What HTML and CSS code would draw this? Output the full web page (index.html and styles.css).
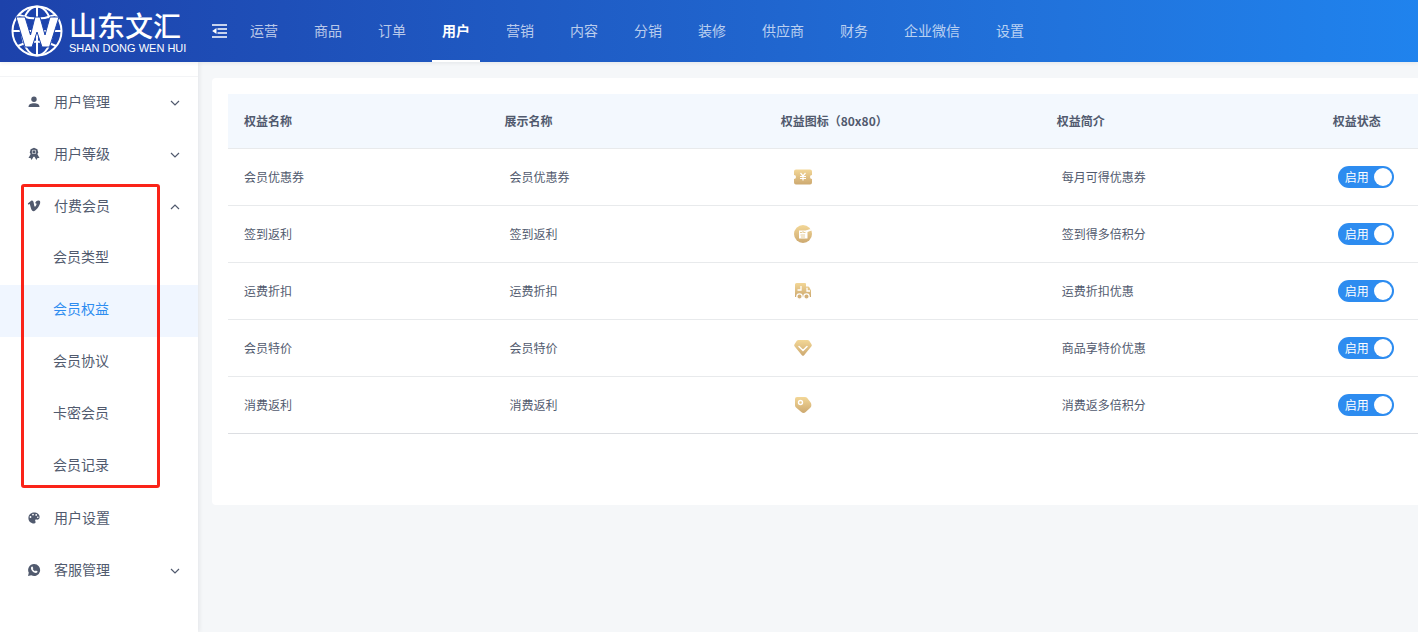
FILE: index.html
```html
<!DOCTYPE html>
<html lang="zh-CN">
<head>
<meta charset="utf-8">
<meta name="viewport" content="width=device-width, initial-scale=1">
<title>会员权益</title>
<link rel="stylesheet" href="styles.css">
</head>
<body>
<svg class="defs" width="0" height="0" aria-hidden="true">
  <defs>
    <linearGradient id="gold" x1="0" y1="0" x2="0" y2="1">
      <stop offset="0" stop-color="#f3d797"/>
      <stop offset="1" stop-color="#cda970"/>
    </linearGradient>
    <symbol id="chevron" viewBox="0 0 10 10"><path d="M1 3l4 4 4-4" fill="none" stroke="currentColor" stroke-width="1.2"/></symbol>
  </defs>
</svg>
<header class="topbar">
  <a class="logo" href="#">
    <svg class="logo-mark" viewBox="0 0 52 52" aria-hidden="true">
      <g fill="none" stroke="#fff" stroke-width="2">
        <circle cx="26" cy="26" r="24.5"/>
        <ellipse cx="26" cy="26" rx="15" ry="24.5"/>
        <path d="M26 2v48M1 26h50M8 10q18 7 36 0M7 41q19-9 38 0"/>
      </g>
      <path d="M5 12h9l5.500 18L24 12h5l5 18 5-18h9L38.500 42H31l-5-15-5 15h-7z" fill="#fff" stroke="#1e46ae" stroke-width="1"/>
    </svg>
    <span class="logo-text">
      <span class="logo-cn">山东文汇</span>
      <span class="logo-en">SHAN DONG WEN HUI</span>
    </span>
  </a>
  <button class="collapse" type="button" aria-label="收起菜单">
    <svg width="16" height="14" viewBox="0 0 16 14" aria-hidden="true"><path d="M0 1h15M5.500 5h9.500M5.500 9h9.500M0 13h15" stroke="#fff" stroke-width="1.700"/><path d="M4.500 4v6L.2 7z" fill="#fff"/></svg>
  </button>
  <nav class="topnav">
    <a href="#">运营</a><a href="#">商品</a><a href="#">订单</a><a class="current" href="#">用户</a><a href="#">营销</a><a href="#">内容</a><a href="#">分销</a><a href="#">装修</a><a href="#">供应商</a><a href="#">财务</a><a href="#">企业微信</a><a href="#">设置</a>
  </nav>
</header>
<div class="layout">
  <aside class="sidebar">
    <nav class="menu">
      <button class="menu-item" type="button">
        <svg class="menu-icon" viewBox="0 0 14 14" aria-hidden="true"><circle cx="7" cy="4.200" r="2.700"/><path d="M1.500 12c0-2.800 2.500-3.800 5.500-3.800s5.500 1 5.500 3.800z"/></svg>
        <span>用户管理</span><svg class="arrow" aria-hidden="true"><use href="#chevron"/></svg>
      </button>
      <button class="menu-item" type="button">
        <svg class="menu-icon" viewBox="0 0 14 14" aria-hidden="true"><path fill-rule="evenodd" d="M7 .8l1.700.6 1.700.8.400 1.800.5 1.500-1 1.500L12.500 11l-2 .1L9.400 13 7.500 9.800h-1L4.600 13l-1.100-1.900-2-.1L3.700 7l-1-1.500.5-1.500.4-1.800 1.700-.8zM7 2.700a2.200 2.200 0 1 0 0 4.400 2.200 2.200 0 0 0 0-4.400z"/><circle cx="7" cy="4.900" r="1.600"/></svg>
        <span>用户等级</span><svg class="arrow" aria-hidden="true"><use href="#chevron"/></svg>
      </button>
      <div class="menu-group">
        <button class="menu-item" type="button" aria-expanded="true">
          <svg class="menu-icon" viewBox="0 0 14 14" aria-hidden="true"><path d="M.8 4.500L4.200 1.800c1.500-.7 2.200.4 2.500 2 .3 1.800.6 3.900 1.200 3.900.5 0 1.700-1.900 1.600-2.700-.1-.9-.9-.8-1.500-.5.6-2.100 1.900-3.100 3.600-3 1.500.1 1.800 1.200 1.500 2.800-.5 2.700-4.200 7.800-6.500 7.900-2 .1-2.400-2-3-4.100-.4-1.500-.6-3-1.100-3-.3 0-.7.300-1.100.6z"/></svg>
          <span>付费会员</span><svg class="arrow up" aria-hidden="true"><use href="#chevron"/></svg>
        </button>
        <div class="submenu">
          <a href="#">会员类型</a>
          <a class="current" href="#">会员权益</a>
          <a href="#">会员协议</a>
          <a href="#">卡密会员</a>
          <a href="#">会员记录</a>
        </div>
        <div class="highlight"></div>
      </div>
      <button class="menu-item" type="button">
        <svg class="menu-icon" viewBox="0 0 14 14" aria-hidden="true"><path fill-rule="evenodd" d="M7 1.500c3.300 0 5.600 2 5.600 4.500 0 2-1.400 2.800-3 2.600-1.200-.2-1.800.5-1.300 1.500.6 1.200.3 2.500-1.300 2.500-3.100 0-5.600-2.300-5.600-5.500S3.900 1.500 7 1.500zM6 2.700a.9.900 0 1 0 0 1.800.9.900 0 0 0 0-1.800zm3.200.3a.9.900 0 1 0 0 1.800.9.900 0 0 0 0-1.800zM3.500 5.100a.9.900 0 1 0 0 1.800.9.900 0 0 0 0-1.800zm7.300.3a.8.800 0 1 0 0 1.600.8.800 0 0 0 0-1.600z"/></svg>
        <span>用户设置</span>
      </button>
      <button class="menu-item" type="button">
        <svg class="menu-icon" viewBox="0 0 14 14" aria-hidden="true"><path d="M7 1a6 6 0 1 1-2.700 11.300L1 13l.8-3.200A6 6 0 0 1 7 1z"/><path d="M4.500 3.700l1-.2.8 1.700-.6.900c.5 1 1.200 1.700 2.300 2.200l.8-.8 1.700.8c.1 1-.7 1.700-1.600 1.700C6.400 9.900 4 7.500 4 5.100c0-.6.200-1.100.5-1.400z" fill="#fff"/></svg>
        <span>客服管理</span><svg class="arrow" aria-hidden="true"><use href="#chevron"/></svg>
      </button>
    </nav>
  </aside>
  <main class="content">
    <section class="card">
      <table class="benefits">
        <thead>
          <tr><th class="col-name" scope="col">权益名称</th><th class="col-wide" scope="col">展示名称</th><th class="col-wide" scope="col">权益图标（80x80）</th><th class="col-wide" scope="col">权益简介</th><th scope="col">权益状态</th></tr>
        </thead>
        <tbody>
          <tr>
            <td>会员优惠券</td><td>会员优惠券</td>
            <td><svg class="badge" viewBox="0 0 20 20" role="img" aria-label="优惠券"><path d="M3 2.500h14q2 0 2 2v3.500a2 2 0 0 0 0 4v3.500q0 2-2 2H3q-2 0-2-2V12a2 2 0 0 0 0-4V4.500q0-2 2-2z" fill="url(#gold)"/><path d="M7.500 6l2.500 3 2.500-3M7 9.500h6M7 11.500h6M10 9v4.500" fill="none" stroke="#fff" stroke-width="1.200"/></svg></td>
            <td>每月可得优惠券</td>
            <td><label class="switch"><input type="checkbox" role="switch" checked><span class="track">启用</span></label></td>
          </tr>
          <tr>
            <td>签到返利</td><td>签到返利</td>
            <td><svg class="badge" viewBox="0 0 20 20" role="img" aria-label="签到"><circle cx="10" cy="10" r="9" fill="url(#gold)"/><path d="M6 6.500h6.500l5-1.500 1 1.500-4 1.500v6.500H6z" fill="#fff"/><path d="M7 8.500h2m1.500 0h2M7.500 11h4.500M8 13h4M10 7v2" stroke="#dfc080" stroke-width=".8"/></svg></td>
            <td>签到得多倍积分</td>
            <td><label class="switch"><input type="checkbox" role="switch" checked><span class="track">启用</span></label></td>
          </tr>
          <tr>
            <td>运费折扣</td><td>运费折扣</td>
            <td><svg class="badge" viewBox="0 0 20 20" role="img" aria-label="运费"><path d="M3.500 2H12q1 0 1 1v2.500h2q1 0 1.500 1L18 9.500V16H2V3.500Q2 2 3.500 2z" fill="url(#gold)"/><path d="M14 6.700V10h3M8 5v4H4.500" fill="none" stroke="#fff" stroke-width="1.300"/><g fill="#d3b078" stroke="#fff" stroke-width="1.300"><circle cx="6.500" cy="15.500" r="2.700"/><circle cx="13.500" cy="15.500" r="2.700"/></g></svg></td>
            <td>运费折扣优惠</td>
            <td><label class="switch"><input type="checkbox" role="switch" checked><span class="track">启用</span></label></td>
          </tr>
          <tr>
            <td>会员特价</td><td>会员特价</td>
            <td><svg class="badge" viewBox="0 0 20 20" role="img" aria-label="特价"><path d="M5.500 2h9q1 0 1.700.8l2.300 3.500q.8 1.200-.2 2.200l-7.200 8.700q-1.100 1.200-2.200 0L1.700 8.500q-1-1-.2-2.200l2.300-3.500Q4.500 2 5.500 2z" fill="url(#gold)"/><path d="M6 8.500l4 4 4-4" fill="none" stroke="#fff" stroke-width="1.500" stroke-linecap="round"/></svg></td>
            <td>商品享特价优惠</td>
            <td><label class="switch"><input type="checkbox" role="switch" checked><span class="track">启用</span></label></td>
          </tr>
          <tr>
            <td>消费返利</td><td>消费返利</td>
            <td><svg class="badge" viewBox="0 0 20 20" role="img" aria-label="返利"><path d="M4 2h8q1.200 0 2 .8l3.300 4.300q1 1.200 1 2.500v1.200q0 1-1 2l-4.600 4.100q-2.200 2-4.400 0L3 12.500q-1-1-1-2.200V4Q2 2 4 2z" fill="url(#gold)"/><circle cx="7.500" cy="7.500" r="2" fill="none" stroke="#fff" stroke-width="1.400"/></svg></td>
            <td>消费返多倍积分</td>
            <td><label class="switch"><input type="checkbox" role="switch" checked><span class="track">启用</span></label></td>
          </tr>
        </tbody>
      </table>
    </section>
  </main>
</div>
</body>
</html>
```
FILE: styles.css
```css
* { box-sizing: border-box; }
body {
  margin: 0;
  min-height: 100vh;
  display: flex;
  flex-direction: column;
  background: #f5f7f9;
  color: #515a6e;
  font: 14px/20px "Noto Sans CJK SC", sans-serif;
}
a { color: inherit; text-decoration: none; }
button { border: 0; padding: 0; background: none; color: inherit; font: inherit; cursor: pointer; }
.defs { position: absolute; }

.topbar {
  position: relative;
  z-index: 1;
  display: flex;
  height: 62px;
  color: #fff;
  background: linear-gradient(90deg, #1d42ab, #2173dc 75%, #1e93ff 125%);
  box-shadow: 0 1px 4px rgba(0, 21, 41, 0.08);
}
.logo {
  display: flex;
  align-items: center;
  gap: 6px;
  width: 212px;
  padding-left: 11px;
}
.logo-mark { width: 52px; height: 52px; }
.logo-text { display: flex; flex-direction: column; white-space: nowrap; }
.logo-cn { font-size: 28px; font-weight: 500; line-height: 33px; }
.logo-en { font: 11px/12px "Liberation Sans", Arial, sans-serif; }
.collapse { display: flex; align-items: center; width: 28px; }
.topnav { display: flex; gap: 16px; }
.topnav a {
  padding: 20px 10px;
  border-bottom: 2px solid transparent;
  color: rgba(255, 255, 255, 0.7);
  white-space: nowrap;
}
.topnav .current { color: #fff; font-weight: 700; border-color: #fff; }

.layout { flex: 1; display: flex; }
.sidebar {
  flex: none;
  width: 198px;
  padding-top: 14px;
  background: #fff;
  box-shadow: 2px 0 4px rgba(0, 21, 41, 0.06);
}
.menu { border-top: 1px solid #f3f4f6; }
.menu-item {
  display: flex;
  align-items: center;
  width: 100%;
  height: 52px;
  padding: 0 18px 2px 27px;
  text-align: left;
}
.menu-item span { flex: 1; padding-bottom: 2px; }
.menu-icon { width: 14px; height: 14px; margin-right: 13px; fill: currentColor; }
.arrow { width: 10px; height: 10px; margin-top: 2px; }
.arrow.up { transform: rotate(180deg); }
.menu-group { position: relative; }
.submenu a { display: block; padding: 13px 0 19px 53px; }
.submenu .current { background: #f0f6ff; color: #2d8cf0; }
.highlight {
  position: absolute;
  inset: 3px 38px 5px 21px;
  border: 3px solid #fa2318;
  border-radius: 3px;
  pointer-events: none;
}

.content { flex: 1; min-width: 0; padding: 16px 0 0 14px; }
.card {
  padding: 16px 0 71px 16px;
  background: #fff;
  border-radius: 4px 0 0 4px;
}
.benefits {
  width: 100%;
  table-layout: fixed;
  border-collapse: separate;
  border-spacing: 0;
  font-size: 12px;
}
.benefits th, .benefits td {
  border-bottom: 1px solid #e8eaec;
  text-align: left;
  white-space: nowrap;
}
.benefits th {
  height: 55px;
  padding: 0 0 0 16px;
  background: #f3f8fe;
  font-weight: 700;
}
.benefits td { height: 57px; padding: 0 0 0 21px; }
.benefits td:first-child { padding-left: 16px; }
.benefits tr:last-child td { border-color: #dcdee2; }
.col-name { width: 21.9%; }
.col-wide { width: 23.2%; }
.badge { display: block; width: 20px; height: 20px; margin-left: 7px; }
.switch { display: block; position: relative; width: 56px; cursor: pointer; }
.switch input { position: absolute; inset: 0; width: 100%; height: 100%; margin: 0; opacity: 0; }
.track {
  display: flex;
  align-items: center;
  justify-content: space-between;
  height: 22px;
  padding: 0 2px 0 7px;
  border-radius: 11px;
  background: #2d8cf0;
  color: #fff;
}
.track::after { content: ""; width: 18px; height: 18px; border-radius: 50%; background: #fff; }
```
